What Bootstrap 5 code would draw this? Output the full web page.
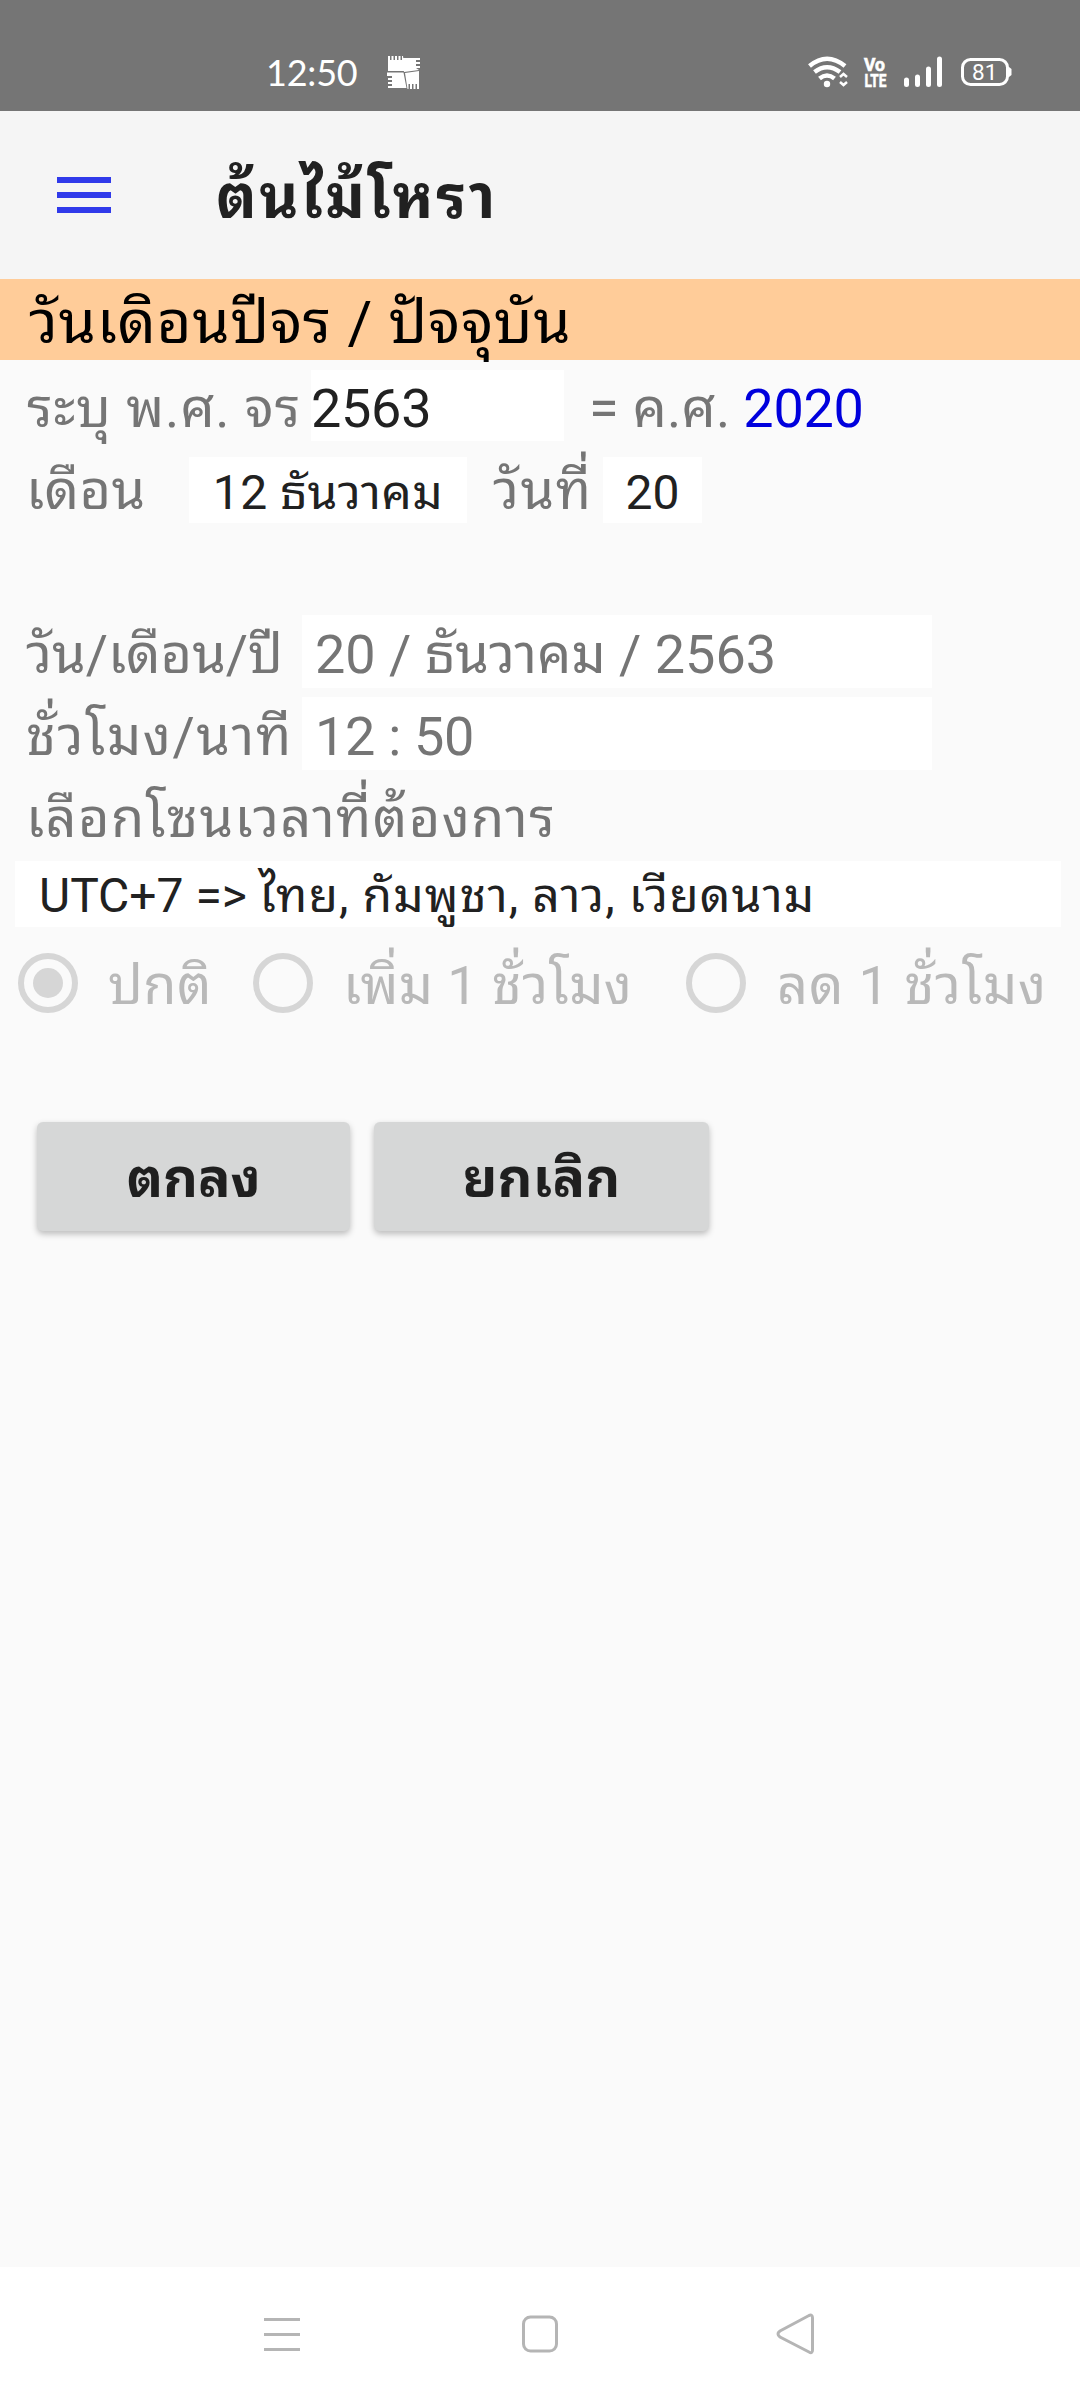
<!DOCTYPE html>
<html lang="th">
<head>
<meta charset="utf-8">
<meta name="viewport" content="width=device-width, initial-scale=1">
<title>ต้นไม้โหรา</title>
<link href="https://cdn.jsdelivr.net/npm/bootstrap@5.3.0/dist/css/bootstrap.min.css" rel="stylesheet">
<style>
body{width:1080px;height:2400px;background:#fafafa;color:#757575;font-family:Roboto,"Noto Sans Thai Looped","Noto Looped Thai","Droid Sans Thai",Loma,Waree,Garuda,"Noto Sans Thai","Noto Sans",sans-serif;font-size:54px;white-space:nowrap;overflow:hidden}
svg{display:block;flex:none}
.statusbar{height:111px;background:#757575;color:#fff;padding:0 68px 0 266px}
.clock{font-family:Lato,sans-serif;font-size:36px;padding-top:33px;width:121px;line-height:78px;letter-spacing:-.2px}
.appbar{height:168px;background:#f5f5f5;padding-left:57px}
.apptitle{margin:0 0 0 105px;font-size:60px;font-weight:700;line-height:174px;color:#212121;letter-spacing:2.6px}
.banner{height:81px;background:#ffcc99;color:#000;font-size:60px;line-height:87px;padding-left:29px;margin-bottom:10px;letter-spacing:.7px}
.line{padding-left:26px}
.line>*{flex:none}
.field{background:#fff}
.ink{color:#212121}
.r1{height:71px;line-height:77px;margin-bottom:16px}
.r2{height:66px;line-height:67px;margin-bottom:92px}
.r3{height:73px;line-height:79px;margin-bottom:9px}
.sel{font-size:48px;line-height:71px;height:66px}
.w1{width:285px;padding-left:1px}.w2{width:253px}.w3{width:163px}.w4{width:278px}.w5{width:99px}.w6{width:276px}.w7{width:630px;padding-left:13px}
.k1{letter-spacing:.9px}.k2{letter-spacing:.4px}.k3{letter-spacing:1.5px}.k4{letter-spacing:1.6px}.k5{letter-spacing:1.4px}.k6{letter-spacing:-.3px}.k7{letter-spacing:.2px}.k8{letter-spacing:1.1px}
.zone{height:66px;margin:0 19px 26px 15px;padding-left:24px;font-size:48px;line-height:69px}
.opts{height:60px;line-height:65px;padding-left:18px;color:#b9b9b9;margin-bottom:109px}
.opts>*{flex:none}
.acts{padding-left:37px;gap:24px}
.acts .btn{height:109px;line-height:113px;padding:0;border:0;border-radius:6px;background:#d6d7d7;color:#1f1f1f;font-size:54px;font-weight:700;box-shadow:0 3px 6px rgba(0,0,0,.25)}
.b1{width:313px}.b2{width:335px}
.navkeys{height:133px;background:#fff;padding:0 264px 0 262px}
</style>
</head>
<body class="d-flex flex-column">
<header class="statusbar d-flex flex-none">
  <div class="clock">12:50</div>
  <svg width="34" height="34" viewBox="0 0 34 34" style="margin-top:55px" fill="#fff"><path d="M1 1h2v4h1.500V1h2v4H8V1h2v4h1.500V1h2v4H15V1h1l2 15H1zM15 3h18v2h-4v2h4v2h-4v2h4v2h-4l3 2-15 2zM0 17.500h16.500L19.500 33H1v-2h4v-2H1v-2h4v-2H1v-2h4v-2H0zM18 18l14-2v18h-2v-5h-1.500v5h-2v-5H25v5h-2v-5h-1.500v5h-1z"/></svg>
  <svg class="ms-auto" width="204" height="34" viewBox="808 56 204 34" style="margin-top:56px" fill="none" stroke="#fff">
    <path d="M809.500 66Q827 51.500 845 66M814.500 72Q827 62.500 840 72M819.500 78.500Q827 72.500 834.500 78.500" stroke-width="4.500"/><circle cx="827" cy="84" r="3.200" fill="#fff" stroke="none"/>
    <path d="M840 77l3.500-3 3.500 3M840 82l3.500 3 3.500-3" stroke-width="2.500"/>
    <text x="864" y="71" font-family="Roboto" font-size="18" font-weight="700" fill="#fff" stroke="#fff" stroke-width=".6" textLength="21" lengthAdjust="spacingAndGlyphs">Vo</text>
    <text x="864.500" y="87" font-family="Roboto" font-size="18.500" font-weight="700" fill="#fff" stroke="#fff" stroke-width=".6" textLength="22" lengthAdjust="spacingAndGlyphs">LTE</text>
    <path d="M906.500 80v4.500M917.500 77v7.500M928.500 69v15.500M939.500 59v25.500" stroke-width="5" stroke-linecap="round"/>
    <rect x="962.500" y="59.500" width="45" height="25" rx="8" stroke-width="3"/><path d="M1009 67v10l2.500-2v-6z" fill="#fff" stroke="none"/>
    <text x="972" y="80" font-family="Roboto" font-size="22.500" fill="#fff" stroke="none">81</text>
  </svg>
</header>
<nav class="appbar d-flex align-items-start">
  <svg width="54" height="36" viewBox="0 0 54 36" style="margin-top:66px" fill="#303aea"><path d="M0 0h54v6H0zM0 15h54v6H0zM0 30h54v6H0z"/></svg>
  <h1 class="apptitle">ต้นไม้โหรา</h1>
</nav>
<main class="flex-grow-1">
  <div class="banner">วันเดิอนปีจร / ปัจจุบัน</div>
  <div class="line r1 d-flex"><span class="w1 k1">ระบุ พ.ศ. จร</span><div class="field ink w2 k6">2563</div><span class="k7" style="margin-left:25px">= ค.ศ.</span><span class="k6" style="margin-left:13px;color:#00d">2020</span></div>
  <div class="line r2 d-flex"><span class="w3 k2">เดือน</span><div class="field sel ink text-center w4 k2">12 ธันวาคม</div><span class="k3" style="margin-left:26px;width:110px">วันที่</span><div class="field sel ink text-center w5">20</div></div>
  <div class="line r3 d-flex"><span class="w6">วัน/เดือน/ปี</span><div class="field w7">20 / ธันวาคม / 2563</div></div>
  <div class="line r3 d-flex"><span class="w6 k4">ชั่วโมง/นาที</span><div class="field w7 k6">12 : 50</div></div>
  <div class="line r3 d-flex"><span class="k5">เลือกโซนเวลาที่ต้องการ</span></div>
  <div class="field ink zone">UTC+7 =&gt; <span class="k8">ไทย, กัมพูชา, ลาว, เวียดนาม</span></div>
  <div class="opts d-flex">
    <svg width="60" height="60" fill="none" stroke="#d6d6d6" stroke-width="6"><circle cx="30" cy="30" r="27"/><circle cx="30" cy="30" r="15" fill="#d6d6d6" stroke="none"/></svg>
    <span class="k2" style="margin-left:30px;width:145px">ปกติ</span>
    <svg width="60" height="60" fill="none" stroke="#d6d6d6" stroke-width="6"><circle cx="30" cy="30" r="27"/></svg>
    <span class="k2" style="margin-left:30px;width:343px">เพิ่ม 1 ชั่วโมง</span>
    <svg width="60" height="60" fill="none" stroke="#d6d6d6" stroke-width="6"><circle cx="30" cy="30" r="27"/></svg>
    <span class="k1" style="margin-left:31px">ลด 1 ชั่วโมง</span>
  </div>
  <div class="acts d-flex"><button class="btn b1">ตกลง</button><button class="btn b2 k7">ยกเลิก</button></div>
</main>
<footer class="navkeys d-flex justify-content-between align-items-center">
  <svg width="40" height="42" viewBox="0 0 40 42" fill="#b5b5b5"><path d="M2 5h36v3H2zM2 20h36v3H2zM2 35h36v3H2z"/></svg>
  <svg width="40" height="42" viewBox="0 0 40 42" fill="none" stroke="#b5b5b5" stroke-width="3"><rect x="4.500" y="4" width="33" height="34" rx="7"/></svg>
  <svg width="40" height="42" viewBox="0 0 40 42" fill="none" stroke="#b5b5b5" stroke-width="3"><path d="M33 2.500Q36.500 1 36.500 5v32Q36.500 41 33 39L4 24Q0 21 4 18Z"/></svg>
</footer>
<script src="https://cdn.jsdelivr.net/npm/bootstrap@5.3.0/dist/js/bootstrap.bundle.min.js"></script>
</body>
</html>
